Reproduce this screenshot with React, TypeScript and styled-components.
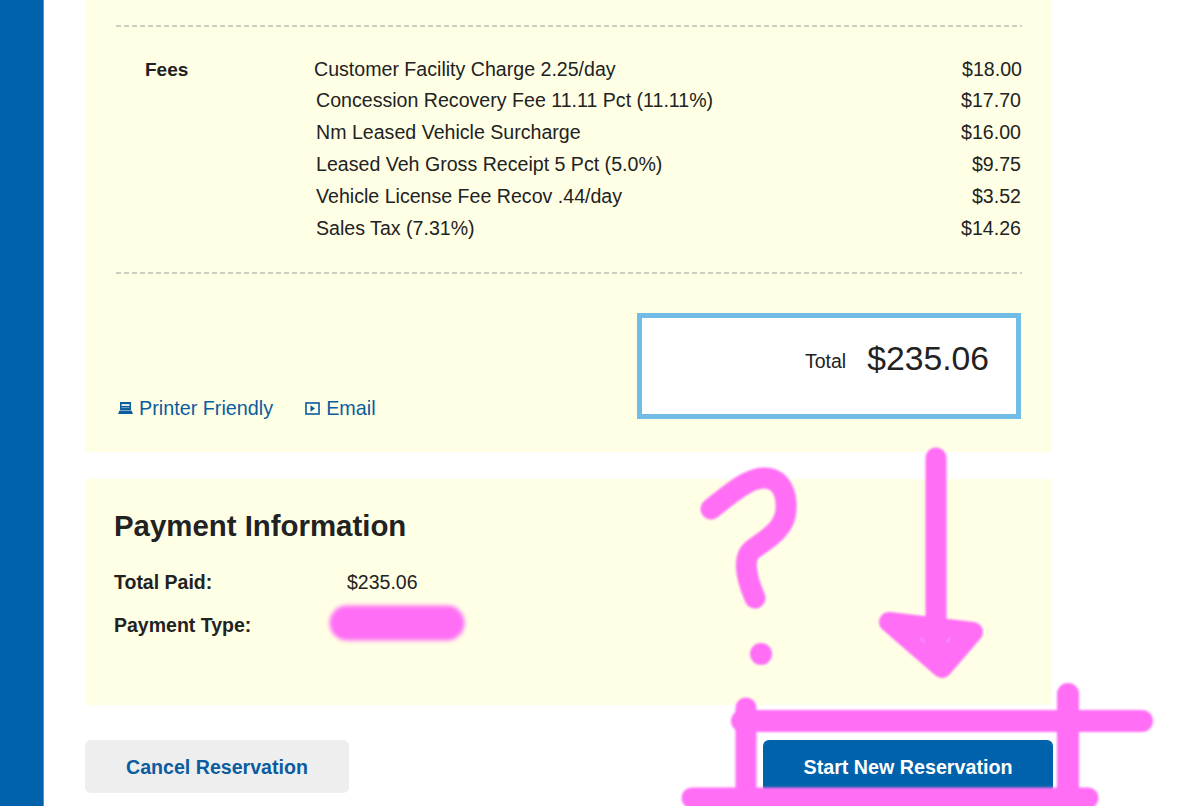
import React from "react";
import styled, { createGlobalStyle } from "styled-components";

const GlobalStyle = createGlobalStyle`
  html, body {
    margin: 0;
    padding: 0;
    height: 806px;
    overflow: hidden;
    background: #fff;
    font-family: "Liberation Sans", Arial, sans-serif;
    color: #222;
  }
`;

const Page = styled.div`
  position: relative;
  display: flex;
  width: 1200px;
  height: 806px;
  overflow: hidden;
`;

const Sidebar = styled.div`
  width: 43px;
  flex: none;
  background: #0062ab;
  border-right: 1px solid #4a94cc;
`;

const Main = styled.main`
  width: 968px;
  margin-left: 41px;
  display: flex;
  flex-direction: column;
`;

const Panel = styled.section<{ $height: number }>`
  height: ${(p) => p.$height}px;
  margin-right: 1px;
  box-sizing: border-box;
  background: #ffffe6;
`;

const SummaryPanel = styled(Panel)`
  padding: 25px 30px 0 31px;
`;

const DashedRule = styled.div`
  height: 2px;
  background-image: repeating-linear-gradient(90deg, #cdcdc2 0 5px, transparent 5px 8px);
`;

const FeeSection = styled.div`
  display: grid;
  grid-template-columns: 197px 1fr;
  padding-top: 26px;
  height: 245px;
  box-sizing: border-box;
`;

const FeeHeading = styled.div`
  padding: 4px 0 0 29px;
  font-size: 19px;
  line-height: 26px;
  font-weight: 700;
`;

const FeeList = styled.div`
  display: flex;
  flex-direction: column;
`;

const FeeRow = styled.div<{ $first?: boolean }>`
  display: flex;
  justify-content: space-between;
  height: ${(p) => (p.$first ? 31 : 32)}px;
  line-height: 32px;
  font-size: 19.6px;
  margin-left: ${(p) => (p.$first ? 1 : 3)}px;
  padding-right: ${(p) => (p.$first ? 0 : 1)}px;
`;

const TotalRow = styled.div`
  display: flex;
  justify-content: space-between;
  align-items: flex-end;
  padding-top: 39px;
`;

const LinkGroup = styled.div`
  display: flex;
  gap: 32px;
  padding-left: 2px;
  margin-bottom: -1px;
`;

const TextLink = styled.a`
  display: flex;
  align-items: center;
  gap: 6px;
  font-size: 19.8px;
  line-height: 24px;
  color: #0b5c9e;
`;

const TotalBox = styled.div`
  width: 384px;
  height: 106px;
  box-sizing: border-box;
  margin-right: 1px;
  border: 5px solid #71bde6;
  background: #fff;
  display: flex;
  align-items: center;
  justify-content: flex-end;
  gap: 21px;
  padding: 0 27px 16px 0;
`;

const TotalLabel = styled.span`
  font-size: 19.5px;
  padding-top: 6px;
`;

const TotalValue = styled.span`
  font-size: 33.7px;
`;

const PaymentPanel = styled(Panel)`
  margin-top: 27px;
  padding: 30px 29px 0;
`;

const PaymentTitle = styled.h2`
  margin: 0 0 27px;
  font-size: 29.4px;
  line-height: 34px;
  font-weight: 700;
`;

const PaymentRow = styled.div`
  display: grid;
  grid-template-columns: 233px 1fr;
  height: 43px;
  line-height: 24px;
  font-size: 19.5px;
`;

const PaymentLabel = styled.span`
  font-weight: 700;
`;

const ButtonRow = styled.div`
  display: flex;
  justify-content: space-between;
  margin-top: 35px;
`;

const ActionButton = styled.button<{ $primary?: boolean }>`
  height: 53px;
  width: ${(p) => (p.$primary ? 290 : 264)}px;
  border: none;
  border-radius: 6px;
  background: ${(p) => (p.$primary ? "#0062ab" : "#eeeeee")};
  color: ${(p) => (p.$primary ? "#fff" : "#0b5c9e")};
  font-family: inherit;
  font-size: ${(p) => (p.$primary ? 19.7 : 19.6)}px;
  font-weight: 700;
  padding: 2px 0 0;
`;

const Scribble = styled.svg`
  position: absolute;
  inset: 0;
  pointer-events: none;
`;

const Blurred = styled.g<{ $amount: number }>`
  filter: blur(${(p) => p.$amount}px);
`;

const fees = [
  ["Customer Facility Charge 2.25/day", "$18.00"],
  ["Concession Recovery Fee 11.11 Pct (11.11%)", "$17.70"],
  ["Nm Leased Vehicle Surcharge", "$16.00"],
  ["Leased Veh Gross Receipt 5 Pct (5.0%)", "$9.75"],
  ["Vehicle License Fee Recov .44/day", "$3.52"],
  ["Sales Tax (7.31%)", "$14.26"],
];

function PrinterIcon() {
  return (
    <svg width="15" height="12" viewBox="0 0 15 12">
      <rect x="2" y="0" width="11" height="8" fill="#0b5c9e" />
      <rect x="3.5" y="2" width="8" height="2" fill="#dfe9dc" />
      <rect x="3.5" y="5.3" width="8" height="0.8" fill="#9dbcd0" />
      <path d="M1.5 8.6h12L15 12H0z" fill="#0b5c9e" />
    </svg>
  );
}

function PlayIcon() {
  return (
    <svg width="15" height="13" viewBox="0 0 15 13">
      <rect x="1" y="1" width="13" height="11" fill="none" stroke="#0b5c9e" strokeWidth="1.6" />
      <path d="M5.5 3.2l4.5 3.3-4.5 3.3z" fill="#0b5c9e" />
    </svg>
  );
}

export default function App() {
  return (
    <Page>
      <GlobalStyle />
      <Sidebar />
      <Main>
        <SummaryPanel $height={452}>
          <DashedRule />
          <FeeSection>
            <FeeHeading>Fees</FeeHeading>
            <FeeList>
              {fees.map(([name, amount], i) => (
                <FeeRow key={name} $first={i === 0}>
                  <span>{name}</span>
                  <span>{amount}</span>
                </FeeRow>
              ))}
            </FeeList>
          </FeeSection>
          <DashedRule />
          <TotalRow>
            <LinkGroup>
              <TextLink>
                <PrinterIcon />
                Printer Friendly
              </TextLink>
              <TextLink>
                <PlayIcon />
                Email
              </TextLink>
            </LinkGroup>
            <TotalBox>
              <TotalLabel>Total</TotalLabel>
              <TotalValue>$235.06</TotalValue>
            </TotalBox>
          </TotalRow>
        </SummaryPanel>
        <PaymentPanel $height={226}>
          <PaymentTitle>Payment Information</PaymentTitle>
          <PaymentRow>
            <PaymentLabel>Total Paid:</PaymentLabel>
            <span>$235.06</span>
          </PaymentRow>
          <PaymentRow>
            <PaymentLabel>Payment Type:</PaymentLabel>
          </PaymentRow>
        </PaymentPanel>
        <ButtonRow>
          <ActionButton>Cancel Reservation</ActionButton>
          <ActionButton $primary>Start New Reservation</ActionButton>
        </ButtonRow>
      </Main>
      <Scribble width="1200" height="806" viewBox="0 0 1200 806">
        <Blurred $amount={2.2} fill="none" stroke="#ff6ef5" strokeLinecap="round">
          <path d="M347 623H447" strokeWidth="35" />
        </Blurred>
        <Blurred $amount={0.8} fill="none" stroke="#ff6ef5" strokeLinecap="round" strokeLinejoin="round">
          <path d="M711 509C730 494 748 478 764 478C782 478 787 495 786 510C785 530 765 540 752 550C743 558 745 575 755 598" strokeWidth="21" />
          <circle cx="761" cy="654" r="11" fill="#ff6ef5" stroke="none" />
          <path d="M936 458V625" strokeWidth="21" />
          <path d="M889 622L973 632L942 668Z" strokeWidth="20" fill="#ff6ef5" />
          <path d="M746 708V806" strokeWidth="21" />
          <path d="M742 721H1142" strokeWidth="22" />
          <path d="M1068 694V806" strokeWidth="22" />
          <path d="M692 798H1088" strokeWidth="21" />
          <path d="M921 638L924 642M950 638L947 642" stroke="#ffb4fa" strokeWidth="1.2" />
        </Blurred>
      </Scribble>
    </Page>
  );
}
